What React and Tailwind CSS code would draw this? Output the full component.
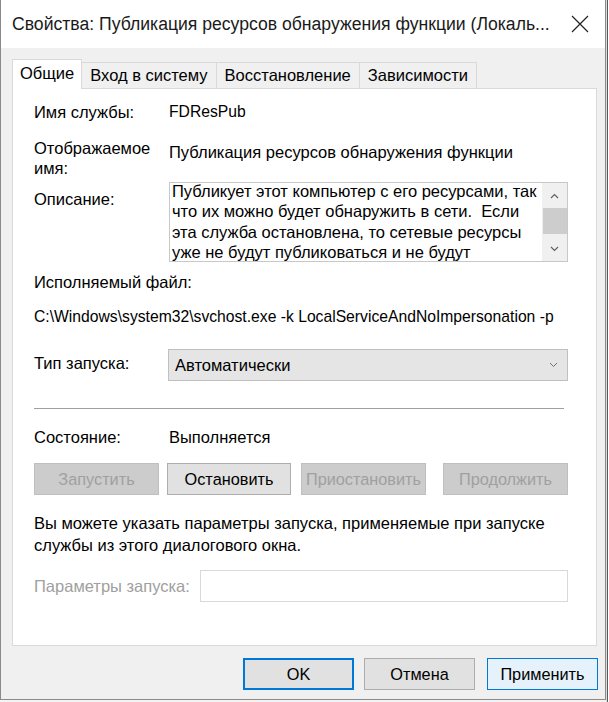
import React from "react";

const font = { fontFamily: '"Liberation Sans", Arial, sans-serif' };

function Btn({ children, variant = "normal", className = "" }) {
  const styles = {
    normal: "bg-[#e1e1e1] border border-[#adadad] text-black",
    disabled: "bg-[#cccccc] border border-[#bfbfbf] text-[#a0a0a0]",
    focus: "bg-[#e1e1e1] border-2 border-[#0078d7] text-black",
    hover: "bg-[#e5f1fb] border border-[#0078d7] text-black",
  };
  return (
    <div className={`flex items-center justify-center shrink-0 h-[32px] text-[16.3px] ${styles[variant]} ${className}`}>
      {children}
    </div>
  );
}

export default function App() {
  return (
    <div className="w-[609px] h-[702px] flex bg-[#f3f3f3] text-black" style={font}>
      <div className="w-[606px] h-[700px] shrink-0 flex flex-col border-l border-r border-b border-[#8a8a8a] bg-[#f0f0f0]">
        {/* title bar */}
        <div className="h-[48px] bg-white flex items-center justify-between pl-[11px] pr-[16px] shrink-0">
          <div className="text-[17.6px] text-[#1a1a1a] whitespace-nowrap">
            Свойства: Публикация ресурсов обнаружения функции (Локаль...
          </div>
          <svg width="18" height="18" viewBox="0 0 18 18">
            <path d="M1 1 L17 17 M17 1 L1 17" stroke="#222" strokeWidth="1.2" fill="none" />
          </svg>
        </div>

        {/* body */}
        <div className="flex-1 flex flex-col pl-[11px] pr-[8px] pt-[10px]">
          {/* tabs */}
          <div className="flex items-end h-[30px] text-[16.5px] relative z-10">
            <div className="h-[30px] px-[7px] bg-white border-t border-l border-r border-[#d9d9d9] flex items-center pb-[2px] -mb-px">
              Общие
            </div>
            <div className="h-[26px] px-[8px] bg-[#f0f0f0] border-t border-r border-[#d9d9d9] flex items-center">
              Вход в систему
            </div>
            <div className="h-[26px] px-[8px] bg-[#f0f0f0] border-t border-r border-[#d9d9d9] flex items-center">
              Восстановление
            </div>
            <div className="h-[26px] px-[8px] bg-[#f0f0f0] border-t border-r border-[#d9d9d9] flex items-center">
              Зависимости
            </div>
          </div>

          {/* panel */}
          <div className="h-[558px] bg-white border border-[#d9d9d9] pl-[21px] pt-[12px] text-[16.5px]">
            <div className="flex h-[22px] items-center">
              <div className="w-[135px] shrink-0">Имя службы:</div>
              <div className="text-[15.7px]">FDResPub</div>
            </div>

            <div className="flex mt-[15px]">
              <div className="w-[135px] shrink-0 leading-[20px]">
                Отображаемое
                <br />
                имя:
              </div>
              <div className="pt-[4px] leading-[20px] whitespace-nowrap">Публикация ресурсов обнаружения функции</div>
            </div>

            <div className="flex mt-[4px]">
              <div className="w-[135px] shrink-0 pt-[7px] leading-[20px]">Описание:</div>
              <div className="w-[399px] h-[80px] shrink-0 border border-[#c8c8c8] flex">
                <div className="flex-1 overflow-hidden pl-[2px]">
                  <div className="-mt-[2px] leading-[20.3px] whitespace-nowrap">
                    Публикует этот компьютер с его ресурсами, так
                    <br />
                    что их можно будет обнаружить в сети.&nbsp; Если
                    <br />
                    эта служба остановлена, то сетевые ресурсы
                    <br />
                    уже не будут публиковаться и не будут
                  </div>
                </div>
                <div className="w-[25px] shrink-0 bg-[#f0f0f0] flex flex-col items-center">
                  <div className="h-[25px] flex items-center justify-center">
                    <svg width="9" height="6" viewBox="0 0 9 6">
                      <path d="M1 5 L4.5 1.5 L8 5" stroke="#606060" strokeWidth="1.2" fill="none" />
                    </svg>
                  </div>
                  <div className="w-[24px] h-[26px] bg-[#cdcdcd]" />
                  <div className="flex-1" />
                  <div className="h-[25px] flex items-center justify-center">
                    <svg width="9" height="6" viewBox="0 0 9 6">
                      <path d="M1 1 L4.5 4.5 L8 1" stroke="#606060" strokeWidth="1.2" fill="none" />
                    </svg>
                  </div>
                </div>
              </div>
            </div>

            <div className="mt-[9px] h-[22px] flex items-center">Исполняемый файл:</div>
            <div className="mt-[13px] h-[22px] flex items-center whitespace-nowrap text-[15.7px]">
              C:\Windows\system32\svchost.exe -k LocalServiceAndNoImpersonation -p
            </div>

            <div className="flex items-center mt-[21px]">
              <div className="w-[134px] shrink-0 -mt-[4px]">Тип запуска:</div>
              <div className="w-[400px] h-[32px] shrink-0 bg-[#e5e5e5] border border-[#c0c0c0] flex items-center justify-between pl-[6px] pr-[9px]">
                <span>Автоматически</span>
                <svg width="9" height="6" viewBox="0 0 9 6">
                  <path d="M1 1 L4.5 4.5 L8 1" stroke="#707070" strokeWidth="1" fill="none" />
                </svg>
              </div>
            </div>

            <div className="mt-[27px] h-[2px] w-[530px] border-t border-[#a0a0a0] border-b border-b-white" />

            <div className="flex h-[22px] items-center mt-[16px]">
              <div className="w-[135px] shrink-0">Состояние:</div>
              <div>Выполняется</div>
            </div>

            <div className="flex mt-[15px]">
              <Btn variant="disabled" className="w-[125px]">Запустить</Btn>
              <Btn variant="normal" className="w-[124px] ml-[8px]">Остановить</Btn>
              <Btn variant="disabled" className="w-[125px] ml-[10px]">Приостановить</Btn>
              <Btn variant="disabled" className="w-[125px] ml-[17px]">Продолжить</Btn>
            </div>

            <div className="mt-[17px] leading-[22px] whitespace-nowrap">
              Вы можете указать параметры запуска, применяемые при запуске
              <br />
              службы из этого диалогового окна.
            </div>

            <div className="flex items-center mt-[14px]">
              <div className="w-[166px] shrink-0 text-[#a0a0a0] whitespace-nowrap">Параметры запуска:</div>
              <div className="w-[368px] h-[32px] shrink-0 border border-[#d9d9d9] bg-white" />
            </div>
          </div>

          {/* footer */}
          <div className="flex justify-end pt-[12px] -mr-px">
            <Btn variant="focus" className="w-[111px]">OK</Btn>
            <Btn variant="normal" className="w-[111px] ml-[10px]">Отмена</Btn>
            <Btn variant="hover" className="w-[111px] ml-[12px]">Применить</Btn>
          </div>
        </div>
      </div>
      <div className="flex-1 flex">
        <div className="w-px bg-[#dcdcdc]" />
        <div className="w-px bg-[#5a5a5a]" />
        <div className="flex-1 bg-white" />
      </div>
    </div>
  );
}
